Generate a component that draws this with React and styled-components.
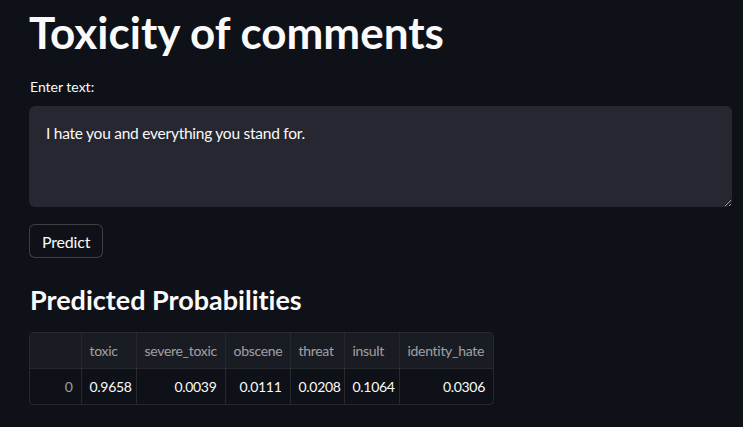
import styled, { createGlobalStyle } from "styled-components";

const GlobalStyle = createGlobalStyle`
  html, body {
    margin: 0;
    padding: 0;
    background: #0e1117;
    color: #fafafa;
    font-family: "Lato", "Liberation Sans", sans-serif;
    font-variant-ligatures: none;
  }
  #root {
    min-height: 100vh;
  }
`;

const Page = styled.div`
  padding: 0 11px 0 29px;
  display: flex;
  flex-direction: column;
`;

const Title = styled.h1`
  margin: 0;
  font-size: 44px;
  font-weight: 700;
  line-height: 64px;
`;

const Label = styled.label`
  margin-top: 13px;
  font-size: 14px;
  line-height: 20px;
  padding-left: 1px;
`;

const TextArea = styled.textarea`
  margin-top: 9px;
  box-sizing: border-box;
  width: 703px;
  height: 101px;
  background: #262730;
  color: #fafafa;
  border: none;
  border-radius: 6px;
  padding: 16px 17px;
  font-family: inherit;
  font-size: 15.5px;
  letter-spacing: -0.25px;
  line-height: 22px;
  resize: vertical;
  outline: none;
`;

const Button = styled.button`
  margin-top: 17px;
  align-self: flex-start;
  height: 34px;
  padding: 0 12px;
  background: #0e1117;
  color: #fafafa;
  border: 1px solid rgba(250, 250, 250, 0.2);
  border-radius: 6px;
  font-family: inherit;
  font-size: 16px;
  letter-spacing: -0.2px;
`;

const Subtitle = styled.h2`
  margin: 24px 0 0;
  font-size: 27px;
  font-weight: 700;
  line-height: 36px;
  padding-left: 1px;
`;

const TableWrap = styled.div`
  margin-top: 14px;
  align-self: flex-start;
  border: 1px solid rgba(250, 250, 250, 0.1);
  border-radius: 4px;
  overflow: hidden;
`;

const Table = styled.table`
  border-collapse: collapse;
  table-layout: fixed;
  width: 463px;
  font-size: 14px;
  letter-spacing: -0.3px;
`;

const Th = styled.th`
  height: 35px;
  padding: 0 8px;
  width: ${(p) => p.w}px;
  box-sizing: border-box;
  text-align: left;
  font-weight: 400;
  white-space: nowrap;
  overflow: hidden;
  color: rgba(250, 250, 250, 0.6);
  background: #1a1c24;
  border-right: 1px solid rgba(250, 250, 250, 0.1);
  border-bottom: 1px solid rgba(250, 250, 250, 0.1);
  &:last-child { border-right: none; }
`;

const Td = styled.td`
  height: 35px;
  padding: 0 8px;
  text-align: right;
  white-space: nowrap;
  color: ${(p) => (p.index ? "rgba(250, 250, 250, 0.6)" : "#fafafa")};
  border-right: 1px solid rgba(250, 250, 250, 0.1);
  &:last-child { border-right: none; }
`;

const cols = [
  { name: "", w: 51 },
  { name: "toxic", w: 55 },
  { name: "severe_toxic", w: 89 },
  { name: "obscene", w: 65 },
  { name: "threat", w: 54 },
  { name: "insult", w: 55 },
  { name: "identity_hate", w: 94 },
];

const values = ["0.9658", "0.0039", "0.0111", "0.0208", "0.1064", "0.0306"];

export default function App() {
  return (
    <>
      <GlobalStyle />
      <Page>
        <Title>Toxicity of comments</Title>
        <Label>Enter text:</Label>
        <TextArea defaultValue="I hate you and everything you stand for." />
        <Button>Predict</Button>
        <Subtitle>Predicted Probabilities</Subtitle>
        <TableWrap>
          <Table>
            <thead>
              <tr>
                {cols.map((c, i) => (
                  <Th key={i} w={c.w}>{c.name}</Th>
                ))}
              </tr>
            </thead>
            <tbody>
              <tr>
                <Td index>0</Td>
                {values.map((v, i) => (
                  <Td key={i}>{v}</Td>
                ))}
              </tr>
            </tbody>
          </Table>
        </TableWrap>
      </Page>
    </>
  );
}
